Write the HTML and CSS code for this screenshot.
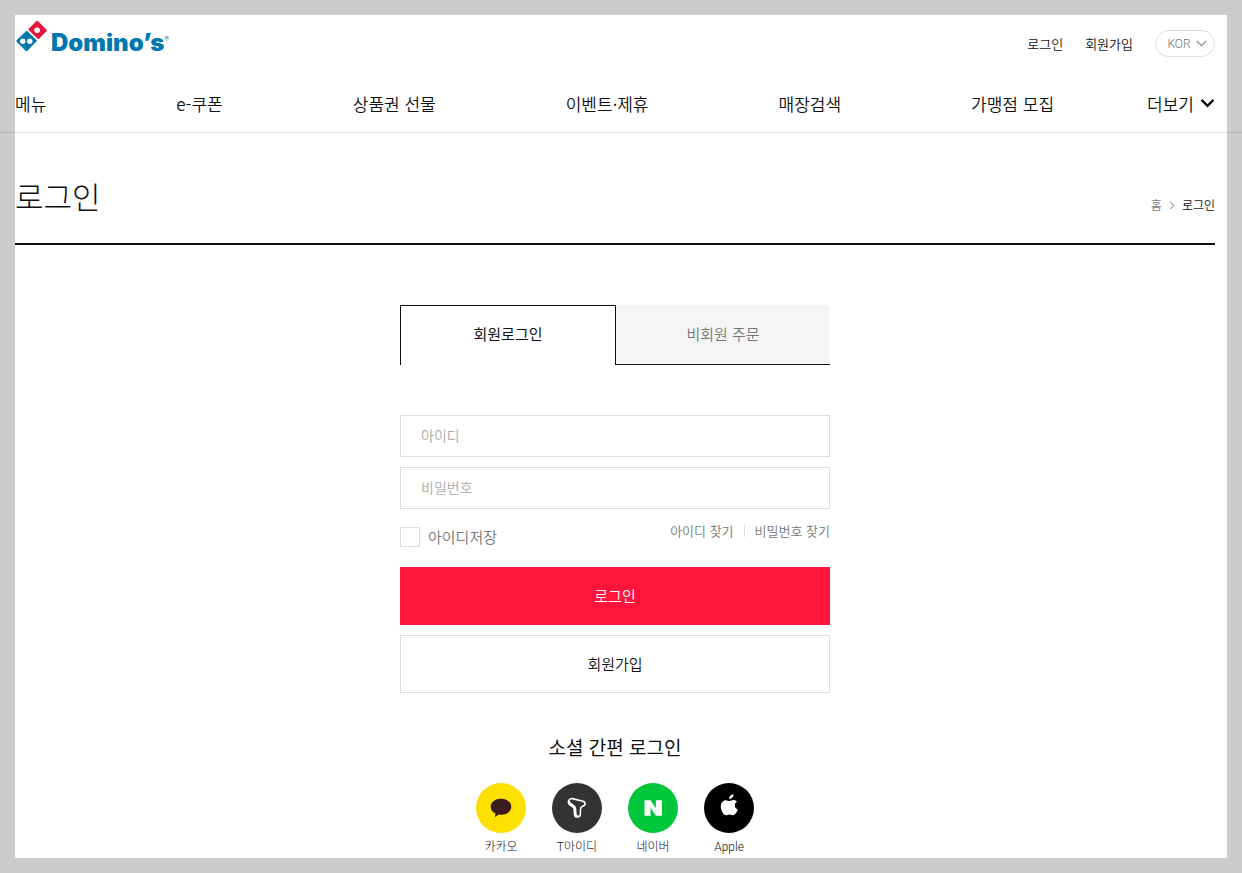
FILE: index.html
```html
<!DOCTYPE html>
<html lang="ko">
<head>
  <meta charset="UTF-8" />
  <meta name="viewport" content="width=device-width, initial-scale=1.0"/>
  <title>로그인 - Domino's</title>
  <link rel="stylesheet" href="styles.css">
</head>
<body>
  <div class="page">
    <header class="header">
      <div class="top">
        <a href="#" class="logo">
          <svg class="logo-mark" width="32" height="32" viewBox="0 0 32 32" aria-hidden="true">
            <path fill="#e4173e" d="M20.100 1.200q1-1 2 0l8.300 8.200q1 1 0 2l-8.200 8-10.200-10z"/>
            <path fill="#0078ae" d="M10.900 10.400l10.200 10-9.300 10.200q-1.200 1.200-2.400 0l-8.600-8.600q-1-1 0-2z"/>
            <path stroke="#fff" stroke-width="1.200" d="M11.200 9.700l10.600 10.400"/>
            <circle cx="21.100" cy="10.300" r="2.800" fill="#fff"/>
            <circle cx="6.800" cy="21.200" r="2.700" fill="#fff"/>
            <circle cx="13.800" cy="21.200" r="2.700" fill="#fff"/>
          </svg>
          <span class="logo-name">Domino’s</span><span class="logo-reg">®</span>
        </a>
        <div class="util">
          <a href="#">로그인</a>
          <a href="#">회원가입</a>
          <button type="button" class="lang">KOR
            <svg width="11" height="7" viewBox="0 0 11 7" aria-hidden="true"><path d="M.7.800l4.800 4.900L10.300.800" fill="none" stroke="#888" stroke-width="1.200"/></svg>
          </button>
        </div>
      </div>
      <nav class="gnb">
        <a href="#">메뉴</a>
        <a href="#">e-쿠폰</a>
        <a href="#">상품권 선물</a>
        <a href="#">이벤트·제휴</a>
        <a href="#">매장검색</a>
        <a href="#">가맹점 모집</a>
        <button type="button" class="more">더보기
          <svg width="15" height="10" viewBox="0 0 15 10" aria-hidden="true"><path d="M1.500 1.800l6 6 6-6" fill="none" stroke="#111" stroke-width="2.400"/></svg>
        </button>
      </nav>
    </header>

    <main class="content">
      <div class="title-wrap">
        <h1>로그인</h1>
        <div class="breadcrumb">
          <a href="#">홈</a>
          <svg width="6" height="9" viewBox="0 0 6 9" aria-hidden="true"><path d="M1 .8l4 3.700-4 3.700" fill="none" stroke="#777"/></svg>
          <span>로그인</span>
        </div>
      </div>

      <div class="login">
        <div class="tabs">
          <button type="button" class="tab active">회원로그인</button>
          <button type="button" class="tab">비회원 주문</button>
        </div>

        <form class="form">
          <input type="text" class="field" placeholder="아이디" aria-label="아이디">
          <input type="password" class="field" placeholder="비밀번호" aria-label="비밀번호">
          <div class="options">
            <div class="save">
              <input type="checkbox" id="saveId">
              <label for="saveId">아이디저장</label>
            </div>
            <div class="find">
              <a href="#">아이디 찾기</a>
              <a href="#">비밀번호 찾기</a>
            </div>
          </div>
          <button type="submit" class="btn btn-red">로그인</button>
          <button type="button" class="btn">회원가입</button>
        </form>

        <h2>소셜 간편 로그인</h2>
        <div class="social">
          <a href="#">
            <svg width="50" height="50" viewBox="0 0 50 50" aria-hidden="true">
              <circle cx="25" cy="25" r="25" fill="#fbe000"/>
              <path fill="#3b1c1c" d="M25 15.800c-5.800 0-10.300 3.500-10.300 8 0 3 1.900 5.400 4.800 6.800l-.7 3.600 4-2.600c.7.100 1.400.2 2.200.2 5.800 0 10.300-3.500 10.300-8s-4.500-8-10.300-8z"/>
            </svg>
            카카오
          </a>
          <a href="#">
            <svg width="50" height="50" viewBox="0 0 50 50" aria-hidden="true">
              <circle cx="25" cy="25" r="25" fill="#333"/>
              <path fill="none" stroke="#fff" stroke-width="1.600" stroke-linejoin="round" d="M20.500 15.600l10.500 2.600c3.200 1 2.500 4.200-.3 5.100-1.700.6-2.200 1.400-2.200 3l-.2 5.200c0 1.500-1 2.300-2.600 2.500-1.900.2-3-.6-3.100-2.300l-.4-5.400c-.1-1.400-.5-2-1.700-2.700l-2.600-1.800c-2.900-2.300-1.300-6.600 2.600-6.200z"/>
              <path fill="none" stroke="#fff" stroke-width="2.200" stroke-linecap="round" stroke-linejoin="round" d="M17.400 19.200c.4 1.300 1.600 2.100 3.200 3 1.800 1 2.500 1.800 2.600 3.600l.4 5.800c.2 1.100.9 1.500 1.900 1.500"/>
            </svg>
            T아이디
          </a>
          <a href="#">
            <svg width="50" height="50" viewBox="0 0 50 50" aria-hidden="true">
              <circle cx="25" cy="25" r="25" fill="#00c73c"/>
              <path fill="#fff" d="M16.500 17.200h6l5.400 8v-8h6v15.600h-6l-5.400-8v8h-6z"/>
            </svg>
            네이버
          </a>
          <a href="#">
            <svg width="50" height="50" viewBox="0 0 50 50" aria-hidden="true">
              <circle cx="25" cy="25" r="25" fill="#000"/>
              <path fill="#fff" d="M29.500 11.300c.2 2.600-1.900 4.800-4.400 4.700-.2-2.400 2-4.600 4.400-4.700zM33 18.800c-3.200 2-2.700 6.400.8 7.700-.9 2.600-2.700 5.700-4.800 5.700-1.300 0-1.900-.8-3.500-.8s-2.300.8-3.500.8c-2.500 0-5.200-4.700-5.200-8.700 0-3.900 2.400-6.300 5.100-6.300 1.500 0 2.600.9 3.700.9 1 0 2.400-1 4-1 1.300 0 2.600.6 3.400 1.700z"/>
            </svg>
            Apple
          </a>
        </div>
      </div>
    </main>
  </div>
</body>
</html>
```
FILE: styles.css
```css
* {
  box-sizing: border-box;
}
body {
  margin: 0;
  padding: 15px;
  background: #ccc;
  color: #111;
  font-family: "Noto Sans CJK KR", sans-serif;
  font-size: 15px;
  font-weight: 350;
}
a {
  color: inherit;
  text-decoration: none;
}
button {
  padding: 0;
  border: 0;
  background: none;
  color: inherit;
  font: inherit;
  cursor: pointer;
}
.page {
  background: #fff;
}

/* header */
.header {
  margin: 0 -15px;
  padding: 0 27px 0 15px;
  border-bottom: 1px solid rgba(0, 0, 0, 0.12);
}
.top {
  display: flex;
  justify-content: space-between;
  height: 57px;
}
.logo {
  display: flex;
  align-items: flex-start;
  padding: 5px 0 0 1px;
}
.logo-name {
  margin: 10px 0 0 3px;
  color: #0078ae;
  font-family: Inter, sans-serif;
  font-size: 24px;
  font-weight: 900;
  line-height: 26px;
}
.logo-reg {
  margin-top: 16px;
  color: #0078ae;
  font-family: Inter, sans-serif;
  font-size: 7px;
  line-height: 8px;
}
.util {
  display: flex;
  align-items: center;
  gap: 22px;
  font-size: 13px;
}
.lang {
  display: flex;
  align-items: center;
  justify-content: center;
  gap: 5px;
  width: 60px;
  height: 27px;
  padding-left: 4px;
  border: 1px solid #ddd;
  border-radius: 14px;
  color: #777;
  font-family: Roboto, "Noto Sans CJK KR", sans-serif;
  font-size: 12px;
  font-weight: 300;
}
.gnb {
  display: flex;
  align-items: center;
  gap: 130px;
  height: 60px;
  padding-top: 2px;
  font-size: 17px;
  white-space: nowrap;
}
.more {
  display: flex;
  align-items: center;
  gap: 6px;
  margin-left: auto;
}
.gnb a:nth-last-child(2) {
  margin-right: -40px;
}

/* title */
.content {
  padding: 0 12px 0 0;
}
.title-wrap {
  display: flex;
  justify-content: space-between;
  align-items: flex-end;
  height: 112px;
  padding-bottom: 24px;
  border-bottom: 2px solid #111;
}
h1 {
  margin: 0;
  font-size: 31px;
  font-weight: 300;
  line-height: 46px;
}
.breadcrumb {
  display: flex;
  align-items: center;
  gap: 7px;
  padding-bottom: 4px;
  font-size: 12px;
  line-height: 20px;
}
.breadcrumb a {
  color: #777;
}

/* login */
.login {
  width: 430px;
  max-width: 100%;
  margin: 0 auto;
  padding-top: 60px;
}
.tabs {
  display: flex;
}
.tab {
  flex: 1;
  height: 60px;
  padding-bottom: 2px;
  border-bottom: 1px solid #111;
  background: #f5f5f5;
  color: #777;
}
.tab.active {
  padding-bottom: 4px;
  border: 1px solid #111;
  border-bottom: 0;
  background: #fff;
  color: #111;
  font-weight: 400;
}
.form {
  padding-top: 50px;
}
.field {
  display: block;
  width: 100%;
  height: 42px;
  margin-bottom: 10px;
  padding: 0 20px 2px;
  border: 1px solid #ddd;
  font: inherit;
  font-size: 14px;
}
.field::placeholder {
  color: #aaa;
}
.options {
  display: flex;
  justify-content: space-between;
  align-items: flex-start;
  height: 48px;
  color: #777;
}
.save {
  display: flex;
  align-items: center;
  gap: 8px;
  padding-top: 8px;
  line-height: 20px;
}
.save input {
  appearance: none;
  width: 20px;
  height: 20px;
  margin: 0;
  border: 1px solid #ddd;
}
.save input:checked {
  background: #111;
}
.find {
  display: flex;
  align-items: center;
  height: 24px;
  font-size: 13px;
  line-height: 12px;
}
.find a + a {
  margin-left: 10px;
  padding-left: 10px;
  border-left: 1px solid #ddd;
}
.btn {
  display: block;
  width: 100%;
  height: 58px;
  margin-bottom: 10px;
  padding-bottom: 2px;
  border: 1px solid #ddd;
}
.btn-red {
  border-color: #ff143c;
  background: #ff143c;
  color: #fff;
}
h2 {
  margin: 40px 0 22px;
  font-size: 19px;
  font-weight: 400;
  line-height: 28px;
  text-align: center;
}
.social {
  display: flex;
  justify-content: center;
  gap: 26px;
  padding-bottom: 1px;
}
.social a {
  display: flex;
  flex-direction: column;
  align-items: center;
  gap: 4px;
  width: 50px;
  font-family: Roboto, "Noto Sans CJK KR", sans-serif;
  font-size: 12px;
  font-weight: 300;
  line-height: 20px;
}
```
